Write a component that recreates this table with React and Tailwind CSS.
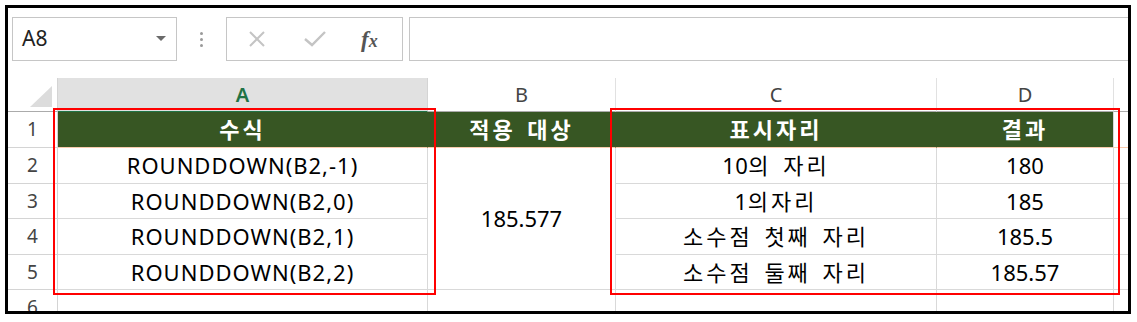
import React from "react"

const rows = [
  { n: "2", a: "ROUNDDOWN(B2,-1)", c: "10의 자리", d: "180" },
  { n: "3", a: "ROUNDDOWN(B2,0)", c: "1의자리", d: "185" },
  { n: "4", a: "ROUNDDOWN(B2,1)", c: "소수점 첫째 자리", d: "185.5" },
  { n: "5", a: "ROUNDDOWN(B2,2)", c: "소수점 둘째 자리", d: "185.57" },
]

// digits keep normal spacing, hangul gets extra tracking
function Mixed({ text }) {
  const parts = text.match(/[0-9]+|[^0-9]+/g)
  return parts.map((p, i) =>
    /[0-9]/.test(p) ? (
      <span key={i} className="tracking-[0.5px]">{p}</span>
    ) : (
      <span key={i} className="tracking-[3px] [word-spacing:3px]">{p}</span>
    )
  )
}

function RowNum({ children }) {
  return (
    <div className="flex items-center justify-center border-r border-b border-[#d4d4d4] text-[19px] text-[#444]">
      {children}
    </div>
  )
}

function Cell({ children, className = "" }) {
  return (
    <div className={`flex items-center justify-center border-r border-b border-[#d9d9d9] text-[22px] text-black ${className}`}>
      {children}
    </div>
  )
}

function GreenCell({ children, last }) {
  return (
    <div
      className={`flex items-center justify-center bg-[#375623] border-b border-b-[#f8cbad] border-r text-[22px] font-bold text-white tracking-[3px] [word-spacing:3px] ${
        last ? "border-r-[#d9d9d9]" : "border-r-[#375623]"
      }`}
    >
      {children}
    </div>
  )
}

export default function App() {
  return (
    <div className="relative w-[1137px] h-[322px] bg-white pt-[5px] pl-[5px] font-['Noto_Sans','Noto_Sans_CJK_KR',sans-serif]">

      {/* frame */}
      <div className="w-[1126px] h-[309px] border-[3px] border-black overflow-hidden flex flex-col">

        {/* formula bar */}
        <div className="h-[70px] shrink-0 flex items-start pt-[9px] pl-[4px]">
          <div className="w-[165px] h-[44px] border border-[#c6c6c6] flex items-center justify-between pl-[9px] pr-[10px]">
            <span className="text-[21px] text-[#222]">A8</span>
            <svg width="10" height="6" viewBox="0 0 10 6">
              <polygon points="0,0 10,0 5,5" fill="#6a6a6a" />
            </svg>
          </div>
          <div className="w-[49px] h-[44px] flex flex-col items-center justify-center gap-[3px]">
            <span className="w-[3px] h-[3px] rounded-full bg-[#9a9a9a]" />
            <span className="w-[3px] h-[3px] rounded-full bg-[#9a9a9a]" />
            <span className="w-[3px] h-[3px] rounded-full bg-[#9a9a9a]" />
          </div>
          <div className="w-[177px] h-[44px] border border-[#c6c6c6] flex items-center">
            <svg className="ml-[21px]" width="18" height="16" viewBox="0 0 18 16">
              <path d="M2 1 L16 15 M16 1 L2 15" stroke="#c4c4c4" strokeWidth="2" fill="none" />
            </svg>
            <svg className="ml-[38px]" width="22" height="16" viewBox="0 0 22 16">
              <path d="M1 8 L8 14 L21 1" stroke="#c4c4c4" strokeWidth="2.4" fill="none" />
            </svg>
            <span className="ml-[35px] text-[23px] leading-none italic font-bold text-[#555] font-['Liberation_Serif',serif]">
              f<span className="text-[18px]">x</span>
            </span>
          </div>
          <div className="ml-[6px] flex-1 h-[44px] border border-r-0 border-[#c6c6c6]" />
        </div>

        {/* sheet grid */}
        <div className="grid grid-cols-[50px_370px_188px_321px_177px_1fr] grid-rows-[34px_36px_36px_35px_36px_35px_35px]">

          {/* column headers */}
          <div className="flex items-end justify-end pr-[5px] pb-[4px] border-r border-b border-[#d4d4d4] border-b-[#ababab]">
            <svg width="22" height="21" viewBox="0 0 22 21">
              <polygon points="22,0 22,21 0,21" fill="#dcdcdc" />
            </svg>
          </div>
          <div className="flex items-center justify-center bg-[#e1e1e1] border-r border-r-[#d4d4d4] border-b border-b-[#217346] text-[20px] text-[#217346] font-semibold">A</div>
          <div className="flex items-center justify-center border-r border-r-[#e1e1e1] border-b border-b-[#ababab] text-[20px] text-[#444]">B</div>
          <div className="flex items-center justify-center border-r border-r-[#e1e1e1] border-b border-b-[#ababab] text-[20px] text-[#444]">C</div>
          <div className="flex items-center justify-center border-r border-r-[#e1e1e1] border-b border-b-[#ababab] text-[20px] text-[#444]">D</div>
          <div className="border-b border-b-[#ababab]" />

          {/* row 1 */}
          <RowNum>1</RowNum>
          <GreenCell>수식</GreenCell>
          <GreenCell>적용 대상</GreenCell>
          <GreenCell>표시자리</GreenCell>
          <GreenCell last>결과</GreenCell>
          <div className="border-b border-b-[#f8cbad]" />

          {/* rows 2-5 */}
          {rows.map((r, i) => (
            <React.Fragment key={r.n}>
              <RowNum>{r.n}</RowNum>
              <Cell className="tracking-[1px]">{r.a}</Cell>
              {i === 0 && <Cell className="row-span-4">185.577</Cell>}
              <Cell><Mixed text={r.c} /></Cell>
              <Cell>{r.d}</Cell>
              <div className="border-b border-[#d9d9d9]" />
            </React.Fragment>
          ))}

          {/* row 6 */}
          <RowNum>6</RowNum>
          <div className="border-r border-b border-[#d9d9d9]" />
          <div className="border-r border-b border-[#d9d9d9]" />
          <div className="border-r border-b border-[#d9d9d9]" />
          <div className="border-r border-b border-[#d9d9d9]" />
          <div className="border-b border-[#d9d9d9]" />
        </div>
      </div>

      {/* highlight boxes */}
      <div className="absolute left-[53px] top-[108px] w-[383px] h-[187px] border-2 border-[#ff0000] pointer-events-none" />
      <div className="absolute left-[610px] top-[108px] w-[510px] h-[187px] border-2 border-[#ff0000] pointer-events-none" />
    </div>
  )
}
